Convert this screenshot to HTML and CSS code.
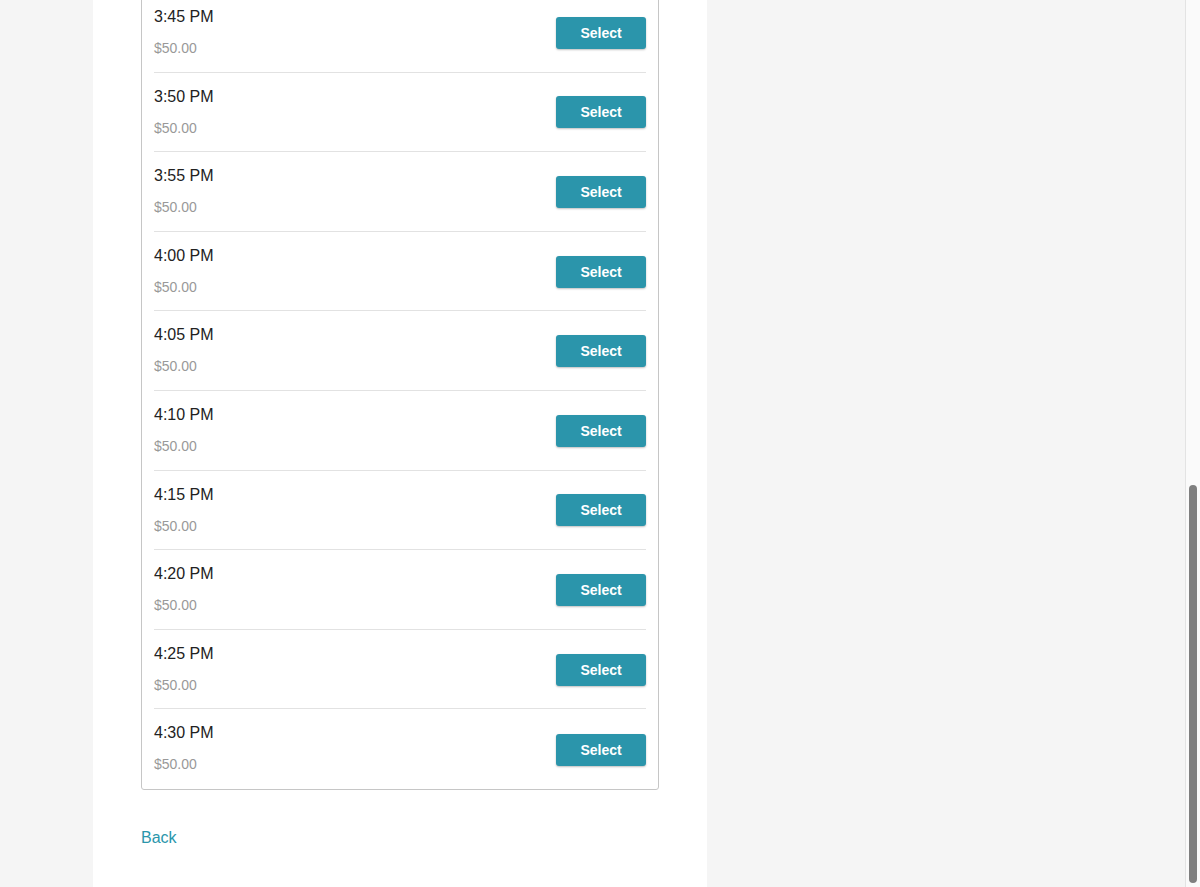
FILE: index.html
```html
<!DOCTYPE html>
<html>
<head>
<meta charset="utf-8">
<link rel="stylesheet" href="styles.css">
</head>
<body>
<div class="page">
  <main class="main">
    <section class="panel">
      <div class="card">
        <div class="slot"><div class="info"><div class="time">3:45 PM</div><div class="price">$50.00</div></div><button class="select">Select</button></div>
        <div class="slot"><div class="info"><div class="time">3:50 PM</div><div class="price">$50.00</div></div><button class="select">Select</button></div>
        <div class="slot"><div class="info"><div class="time">3:55 PM</div><div class="price">$50.00</div></div><button class="select">Select</button></div>
        <div class="slot"><div class="info"><div class="time">4:00 PM</div><div class="price">$50.00</div></div><button class="select">Select</button></div>
        <div class="slot"><div class="info"><div class="time">4:05 PM</div><div class="price">$50.00</div></div><button class="select">Select</button></div>
        <div class="slot"><div class="info"><div class="time">4:10 PM</div><div class="price">$50.00</div></div><button class="select">Select</button></div>
        <div class="slot"><div class="info"><div class="time">4:15 PM</div><div class="price">$50.00</div></div><button class="select">Select</button></div>
        <div class="slot"><div class="info"><div class="time">4:20 PM</div><div class="price">$50.00</div></div><button class="select">Select</button></div>
        <div class="slot"><div class="info"><div class="time">4:25 PM</div><div class="price">$50.00</div></div><button class="select">Select</button></div>
        <div class="slot"><div class="info"><div class="time">4:30 PM</div><div class="price">$50.00</div></div><button class="select">Select</button></div>
      </div>
      <a class="back" href="#">Back</a>
    </section>
  </main>
  <div class="scrollbar"><div class="thumb"></div></div>
</div>
</body>
</html>
```

FILE: styles.css
```css
* { box-sizing: border-box; }
html, body {
  margin: 0;
  padding: 0;
  height: 100%;
  overflow: hidden;
}
body {
  background: #f5f5f5;
  font-family: "Liberation Sans", Arial, Helvetica, sans-serif;
  color: #222;
}
.page {
  display: flex;
  height: 887px;
}
.main {
  flex: 1;
  display: flex;
}
.panel {
  margin-left: 93px;
  width: 614px;
  background: #fff;
  height: 100%;
  display: flex;
  flex-direction: column;
  padding-left: 48px;
}
.card {
  width: 518px;
  margin-top: -8px;
  border: 1px solid #c6c6c6;
  border-radius: 3px;
  padding: 0 12px;
  background: #fff;
}
.slot {
  display: flex;
  align-items: center;
  justify-content: space-between;
  height: 79.6px;
  border-bottom: 1px solid #e2e2e2;
}
.slot:last-child {
  border-bottom: none;
  height: 80px;
}
.info {
  display: flex;
  flex-direction: column;
  padding-top: 12px;
  height: 100%;
}
.time {
  font-size: 16px;
  line-height: 24px;
  color: #222;
}
.price {
  font-size: 14px;
  line-height: 20px;
  margin-top: 9px;
  color: #999;
}
.select {
  width: 90px;
  height: 32px;
  border: none;
  border-radius: 3px;
  background: #2b95ab;
  color: #fff;
  font-family: "Liberation Sans", Arial, Helvetica, sans-serif;
  font-weight: bold;
  font-size: 14px;
  box-shadow: 0 1px 2px rgba(0,0,0,0.25);
  padding: 0;
  margin-top: 1px;
}
.back {
  margin-top: 36px;
  font-size: 16px;
  line-height: 24px;
  color: #2a96ab;
  text-decoration: none;
  align-self: flex-start;
}
.scrollbar {
  width: 15px;
  flex: none;
  background: #fafafa;
  border-left: 1px solid #e3e3e3;
  padding: 485px 0 0 3px;
}
.thumb {
  width: 8px;
  height: 398px;
  border-radius: 4px;
  background: #7f7f7f;
}
```
